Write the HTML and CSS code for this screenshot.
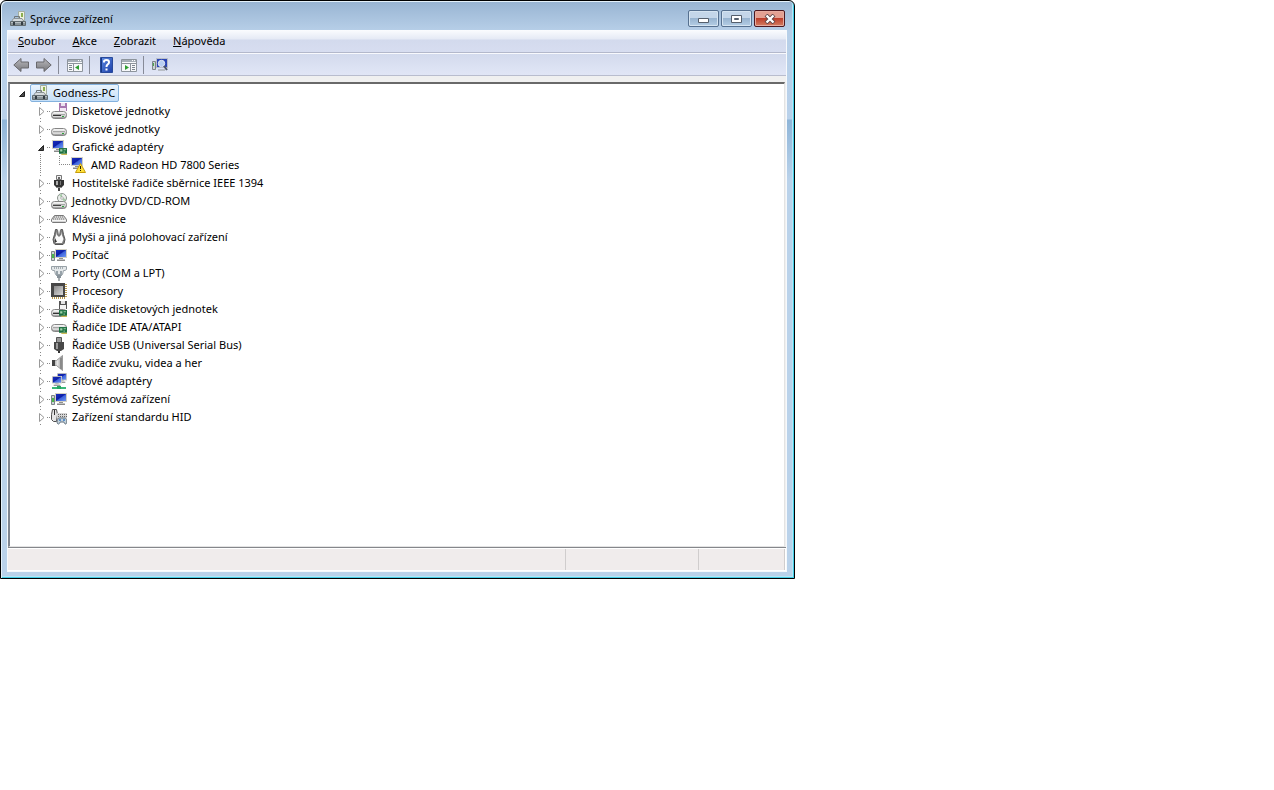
FILE: index.html
```html
<!DOCTYPE html>
<html lang="cs">
<head>
<meta charset="utf-8">
<title>Správce zařízení</title>
<link rel="stylesheet" href="styles.css">
</head>
<body>
<svg class="defs" aria-hidden="true">
  <defs>
    <linearGradient id="gBlue" x1="0" y1="0" x2="1" y2="1"><stop offset="0" stop-color="#1a2fc0"/><stop offset=".45" stop-color="#0d1fa6"/><stop offset=".55" stop-color="#3f63dc"/><stop offset="1" stop-color="#6e97f0"/></linearGradient>
    <linearGradient id="gGrey" x1="0" y1="0" x2="1" y2="0"><stop offset="0" stop-color="#8b8b8b"/><stop offset=".5" stop-color="#e6e6e6"/><stop offset="1" stop-color="#8d8d8d"/></linearGradient>
    <linearGradient id="gArrow" x1="0" y1="0" x2="0" y2="1"><stop offset="0" stop-color="#b9b9bd"/><stop offset="1" stop-color="#77777b"/></linearGradient>
    <linearGradient id="gHelp" x1="0" y1="0" x2="1" y2="1"><stop offset="0" stop-color="#5f8ce4"/><stop offset="1" stop-color="#1c3fa8"/></linearGradient>
    <linearGradient id="gChip" x1="0" y1="0" x2="1" y2="1"><stop offset="0" stop-color="#8a8a8a"/><stop offset="1" stop-color="#d8d8d8"/></linearGradient>
    <linearGradient id="gDrive" x1="0" y1="0" x2="0" y2="1"><stop offset="0" stop-color="#fbfbfb"/><stop offset=".5" stop-color="#dadada"/><stop offset="1" stop-color="#8f8f8f"/></linearGradient>

    <symbol id="open" viewBox="0 0 19 18"><path d="M11.500 7.500v5h-5z" fill="#4a4a4a" stroke="#222" stroke-linejoin="round"/></symbol>
    <symbol id="closed" viewBox="0 0 19 18"><path d="M7.500 5.500v8l4.500-4z" fill="#fff" stroke="#999"/></symbol>

    <symbol id="board" viewBox="0 0 7 6"><path d="M0 0h7v5H0z" fill="#1c7040"/><path d="M1 1h2v2H1zM4 1h2v1H4zM4 3h1v1H4z" fill="#9fd0aa"/><path d="M2 5h5v1H2z" fill="#c9b64a"/></symbol>
    <symbol id="screen" viewBox="0 0 12 12"><path d="M0 0h12v9H0z" fill="#d3d1c4"/><path d="M1 1h10v7H1z" fill="url(#gBlue)"/><path d="M4 9h4v1H4z" fill="#8f8f8f"/><path d="M2 10h8v1H2z" fill="#c4c4c4"/><path d="M2 11h8v1H2z" fill="#8a8a8a"/></symbol>
    <symbol id="drive" viewBox="0 0 16 8"><rect x=".5" y=".5" width="15" height="7" rx="3" fill="url(#gDrive)" stroke="#858585"/><path d="M2 3.500h12" stroke="#a5a5a5"/><path d="M2 5.500h12" stroke="#d9d9d9"/><path d="M11 5h2v1h-2z" fill="#2ca23a"/></symbol>

    <symbol id="manager" viewBox="0 0 16 16"><path d="M8.500 .5h6v9h-6z" fill="#eef2e2" stroke="#a3ada0"/><path d="M11 2h2v4h-2z" fill="#8bae50"/><path d="M4.500 7.500v-2h5v2" fill="none" stroke="#6f777b"/><path d="M3.500 7.500h8.500l2 3H1.500z" fill="#d5dadc" stroke="#8b9397"/><path d="M.5 10.500h15v4H.5z" fill="#8a9498" stroke="#626c70"/><path d="M1 11h14v1H1z" fill="#b7bfc2"/><path d="M3 11h2v3H3zM11 11h2v3h-2z" fill="#343d43"/></symbol>
    <symbol id="floppy-drive" viewBox="0 0 16 16"><path d="M8 0h8v8H8z" fill="#a878b0"/><path d="M10 0h4v3h-4z" fill="#ece4ef"/><path d="M9 5h6v3H9z" fill="#f3e9f5"/><use href="#drive" y="8" width="16" height="8"/><path d="M2 12h8v1H2z" fill="#333"/></symbol>
    <symbol id="disk-drive" viewBox="0 0 16 16"><use href="#drive" y="7" width="16" height="8"/></symbol>
    <symbol id="display" viewBox="0 0 16 16"><use href="#screen" x="1" y="1" width="12" height="12"/><use href="#board" x="8" y="9" width="8" height="7"/></symbol>
    <symbol id="warning" viewBox="0 0 16 16"><use href="#screen" x="1" y="0" width="12" height="12"/><path d="M10.500 6.500l5 9h-10z" fill="#ffe13a" stroke="#c79d0c" stroke-linejoin="round"/><path d="M10 9h1v3h-1zM10 13h1v1h-1z" fill="#2b2400"/></symbol>
    <symbol id="firewire" viewBox="0 0 16 16"><path d="M5.500 .5h5v4h-5z" fill="#efefef" stroke="#777"/><path d="M7 2h2v2H7z" fill="#666"/><path d="M3 5h10v5l-2 2H5l-2-2z" fill="#333"/><path d="M5 6h2v4H5z" fill="#aaa"/><path d="M9 6h1v4H9z" fill="#777"/><path d="M5 12h6v1H5z" fill="#888"/><path d="M7 13h2v3H7z" fill="#444"/></symbol>
    <symbol id="usb" viewBox="0 0 16 16"><path d="M5.500 .5h5v5h-5z" fill="#999" stroke="#555"/><path d="M3 5h10v7l-3 2H6l-3-2z" fill="#484848"/><path d="M5 6h2v6H5z" fill="#9a9a9a"/><path d="M7 14h2v2H7z" fill="#333"/></symbol>
    <symbol id="optical" viewBox="0 0 16 16"><circle cx="11" cy="5" r="4.500" fill="#eceeec" stroke="#8b948e"/><path d="M11 5L8 2l3-1zM11 5l4 1-2 3z" fill="#a3cba5"/><circle cx="11" cy="5" r="1.300" fill="#fff" stroke="#777" stroke-width=".5"/><use href="#drive" y="8" width="16" height="8"/><path d="M2 12h8v1H2z" fill="#444"/></symbol>
    <symbol id="keyboard" viewBox="0 0 16 16"><path d="M3.500 4.500h9l3 4v2l-1 1h-13l-1-1v-2z" fill="#d4d4d4" stroke="#777"/><path d="M3 6h10M2 8h12" stroke="#777" stroke-dasharray="1 1"/><path d="M1 9h14v1H1z" fill="#f5f5f5"/></symbol>
    <symbol id="mouse" viewBox="0 0 16 16"><path d="M4.500 .5h7l1 5 1.500 5-1 4-1 1H4l-1-1-1-4 1.500-5z" fill="#7d7d7d" stroke="#555"/><path d="M6.500 0h3l1 5 2 5-1.500 4h-6L3.500 10l2-5z" fill="#fafafa"/><path d="M6 1h1l1 5 1-5h1v5l-2 2-2-2z" fill="#777"/><path d="M4 9v4h2z" fill="#333"/></symbol>
    <symbol id="computer" viewBox="0 0 16 16"><path d="M.5 4.500h3v9h-3z" fill="#ccd2d5" stroke="#7d8589"/><path d="M1 7h2v4H1z" fill="#49b64a"/><use href="#screen" x="4" y="2" width="12" height="12"/></symbol>
    <symbol id="port" viewBox="0 0 16 16"><path d="M.5 1.500h15v3l-1.500 1h-1.500l-1 4h-7l-1-4H2L.500 4.500z" fill="#e4e8ea" stroke="#98a1a7"/><path d="M3 3h10" stroke="#66727a" stroke-dasharray="1 1"/><path d="M5 6h2v5H5zM9 6h2v5H9z" fill="#97a2a9"/><path d="M6 10h4v3H6z" fill="#89939a"/><path d="M7 13h2v3H7z" fill="#a8adb0"/></symbol>
    <symbol id="chip" viewBox="0 0 16 16"><path d="M15 1v14M1 15h14" stroke="#b8994c" stroke-width="2" stroke-dasharray="1 1"/><path d="M0 0h14v14H0z" fill="#474747"/><path d="M3 3h9v9H3z" fill="url(#gChip)"/></symbol>
    <symbol id="floppy-ctl" viewBox="0 0 16 16"><path d="M8 0h8v8H8z" fill="#555"/><path d="M10 0h4v3h-4z" fill="#e6e6e6"/><path d="M9 4h6v4H9z" fill="#f4f4f4"/><use href="#drive" y="8" width="16" height="8"/><path d="M2 12h6v1H2z" fill="#333"/><use href="#board" x="8" y="9" width="8" height="7"/></symbol>
    <symbol id="ide" viewBox="0 0 16 16"><use href="#drive" y="5" width="16" height="8"/><use href="#board" x="8" y="8" width="8" height="7"/></symbol>
    <symbol id="sound" viewBox="0 0 16 16"><path d="M1.500 5.500h4l6-5v15l-6-5h-4z" fill="url(#gGrey)" stroke="#9b9b9b"/><path d="M9 3h2v11H9z" fill="#8a8a8a"/><path d="M1 5h3v6H1z" fill="#444"/></symbol>
    <symbol id="network" viewBox="0 0 16 16"><use href="#screen" x="6" y="0" width="10" height="10"/><use href="#screen" x="1" y="3" width="10" height="10"/><path d="M1 14h14v2H1z" fill="#39b778"/><path d="M6 13h4v3H6z" fill="#27a563"/></symbol>
    <symbol id="hid" viewBox="0 0 16 16"><path d="M1.500 .5h4l1 5-1 7h-3l-2-2v-5z" fill="#e5e5e5" stroke="#505050"/><path d="M3 1h1v5H3z" fill="#333"/><path d="M6 4h10v5H6z" fill="#d5d5d5"/><path d="M7 5.500h9M7 7.500h9" stroke="#666" stroke-dasharray="1 1"/><path d="M7 15c-2-1 0-6 1-6h6c2 0 2 5 1 6-1 1-2-2-2-2H9s-1 3-2 2z" fill="#c3d2dd" stroke="#63717c"/><circle cx="9" cy="11" r="1" fill="#397ac3"/><circle cx="13" cy="11" r="1" fill="#397ac3"/></symbol>

    <symbol id="back" viewBox="0 0 16 16"><path d="M.8 8L8 1.500V5h7.500v6H8v3.500z" fill="url(#gArrow)" stroke="#68686c" stroke-linejoin="round"/></symbol>
    <symbol id="forward" viewBox="0 0 16 16"><path d="M15.200 8L8 1.500V5H.5v6H8v3.500z" fill="url(#gArrow)" stroke="#68686c" stroke-linejoin="round"/></symbol>
    <symbol id="pane" viewBox="0 0 16 16"><path d="M.5 2.500h15v12H.5z" fill="#f7f8fa" stroke="#8d949c"/><path d="M1 3h14v2H1z" fill="#a7afb8"/><path d="M11 3h1v1h-1zM13 3h1v1h-1z" fill="#fff"/><path d="M1 6.500h14" stroke="#8d949c"/><path d="M6.500 7v7" stroke="#8d949c"/><path d="M2 8.500h3M2 10.500h3M2 12.500h3" stroke="#7c858e"/><path d="M12 8v5l-4-2.500z" fill="#2f9e31"/></symbol>
    <symbol id="pane-right" viewBox="0 0 16 16"><path d="M.5 2.500h15v12H.5z" fill="#f7f8fa" stroke="#8d949c"/><path d="M1 3h14v2H1z" fill="#a7afb8"/><path d="M11 3h1v1h-1zM13 3h1v1h-1z" fill="#fff"/><path d="M1 6.500h14" stroke="#8d949c"/><path d="M9.500 7v7" stroke="#8d949c"/><path d="M11 8.500h3M11 10.500h3M11 12.500h3" stroke="#7c858e"/><path d="M4 8v5l4-2.500z" fill="#2f9e31"/></symbol>
    <symbol id="help" viewBox="0 0 16 16"><path d="M2.500 .5h12v15h-12z" fill="url(#gHelp)" stroke="#294a9b"/><path d="M3 1h1v14H3z" fill="#173985"/><path d="M6 5.500V4.500Q6 3 8.500 3T11 5.200Q11 6.500 9.700 7.300T8.500 10M8.500 11.500v2" fill="none" stroke="#fff" stroke-width="2"/></symbol>
    <symbol id="scan" viewBox="0 0 16 16"><path d="M.5 4.500h3v8h-3z" fill="#ccd2d5" stroke="#7d8589"/><path d="M1 6h1v3H1z" fill="#49a64a"/><path d="M4.500 1.500h11v9h-11z" fill="#2b45b4" stroke="#b9bec9"/><path d="M6 12h7v2H6z" fill="#b9bec5"/><circle cx="9.500" cy="6.500" r="3.200" fill="#b9cff2" stroke="#e4e9f2"/><path d="M12 9l3 4" stroke="#4f5868" stroke-width="2"/></symbol>
  </defs>
</svg>

<main class="window">
  <header class="titlebar">
    <svg class="icon"><use href="#manager"/></svg>
    <h1 class="title">Správce zařízení</h1>
    <div class="controls">
      <button class="control" aria-label="Minimalizovat"><svg viewBox="0 0 12 10"><path d="M.5 4.500h10v4H.5z" fill="#fff" stroke="#555f6c"/></svg></button>
      <button class="control" aria-label="Maximalizovat"><svg viewBox="0 0 12 10"><path d="M.5 1.500h10v7H.5z" fill="#fff" stroke="#555f6c"/><path d="M3.500 4.500h4v1h-4z" fill="#9fb8d2" stroke="#555f6c"/></svg></button>
      <button class="control control-close" aria-label="Zavřít"><svg viewBox="0 0 12 10"><path d="M2 1l8 8M10 1L2 9" stroke="#5b4446" stroke-width="4"/><path d="M2.500 1.500l7 7M9.500 1.500l-7 7" stroke="#fff" stroke-width="2.400"/></svg></button>
    </div>
  </header>
  <div class="client">
    <nav class="menubar">
      <button class="menu"><u>S</u>oubor</button>
      <button class="menu"><u>A</u>kce</button>
      <button class="menu"><u>Z</u>obrazit</button>
      <button class="menu"><u>N</u>ápověda</button>
    </nav>
    <div class="toolbar" role="toolbar">
      <button class="tool" aria-label="Zpět"><svg class="icon"><use href="#back"/></svg></button>
      <button class="tool" aria-label="Vpřed"><svg class="icon"><use href="#forward"/></svg></button>
      <span class="separator"></span>
      <button class="tool" aria-label="Zobrazit strom konzoly"><svg class="icon"><use href="#pane"/></svg></button>
      <span class="separator"></span>
      <button class="tool" aria-label="Nápověda"><svg class="icon"><use href="#help"/></svg></button>
      <button class="tool" aria-label="Zobrazit podokno akcí"><svg class="icon"><use href="#pane-right"/></svg></button>
      <span class="separator"></span>
      <button class="tool" aria-label="Vyhledat změny hardwaru"><svg class="icon"><use href="#scan"/></svg></button>
    </div>
    <section class="panel">
      <ul class="tree">
        <li>
          <div class="row"><button class="toggle" aria-label="Sbalit"><svg><use href="#open"/></svg></button><span class="selected"><svg class="icon"><use href="#manager"/></svg><span class="label">Godness-PC</span></span></div>
          <ul class="branch">
            <li class="row"><button class="toggle guide" aria-label="Rozbalit"><svg><use href="#closed"/></svg></button><svg class="icon"><use href="#floppy-drive"/></svg><span class="label">Disketové jednotky</span></li>
            <li class="row"><button class="toggle guide" aria-label="Rozbalit"><svg><use href="#closed"/></svg></button><svg class="icon"><use href="#disk-drive"/></svg><span class="label">Diskové jednotky</span></li>
            <li>
              <div class="row"><button class="toggle guide" aria-label="Sbalit"><svg><use href="#open"/></svg></button><svg class="icon"><use href="#display"/></svg><span class="label">Grafické adaptéry</span></div>
              <ul class="leaves">
                <li class="row"><span class="elbow"></span><svg class="icon"><use href="#warning"/></svg><span class="label">AMD Radeon HD 7800 Series</span></li>
              </ul>
            </li>
            <li class="row"><button class="toggle guide" aria-label="Rozbalit"><svg><use href="#closed"/></svg></button><svg class="icon"><use href="#firewire"/></svg><span class="label">Hostitelské řadiče sběrnice IEEE 1394</span></li>
            <li class="row"><button class="toggle guide" aria-label="Rozbalit"><svg><use href="#closed"/></svg></button><svg class="icon"><use href="#optical"/></svg><span class="label">Jednotky DVD/CD-ROM</span></li>
            <li class="row"><button class="toggle guide" aria-label="Rozbalit"><svg><use href="#closed"/></svg></button><svg class="icon"><use href="#keyboard"/></svg><span class="label">Klávesnice</span></li>
            <li class="row"><button class="toggle guide" aria-label="Rozbalit"><svg><use href="#closed"/></svg></button><svg class="icon"><use href="#mouse"/></svg><span class="label">Myši a jiná polohovací zařízení</span></li>
            <li class="row"><button class="toggle guide" aria-label="Rozbalit"><svg><use href="#closed"/></svg></button><svg class="icon"><use href="#computer"/></svg><span class="label">Počítač</span></li>
            <li class="row"><button class="toggle guide" aria-label="Rozbalit"><svg><use href="#closed"/></svg></button><svg class="icon"><use href="#port"/></svg><span class="label">Porty (COM a LPT)</span></li>
            <li class="row"><button class="toggle guide" aria-label="Rozbalit"><svg><use href="#closed"/></svg></button><svg class="icon"><use href="#chip"/></svg><span class="label">Procesory</span></li>
            <li class="row"><button class="toggle guide" aria-label="Rozbalit"><svg><use href="#closed"/></svg></button><svg class="icon"><use href="#floppy-ctl"/></svg><span class="label">Řadiče disketových jednotek</span></li>
            <li class="row"><button class="toggle guide" aria-label="Rozbalit"><svg><use href="#closed"/></svg></button><svg class="icon"><use href="#ide"/></svg><span class="label">Řadiče IDE ATA/ATAPI</span></li>
            <li class="row"><button class="toggle guide" aria-label="Rozbalit"><svg><use href="#closed"/></svg></button><svg class="icon"><use href="#usb"/></svg><span class="label">Řadiče USB (Universal Serial Bus)</span></li>
            <li class="row"><button class="toggle guide" aria-label="Rozbalit"><svg><use href="#closed"/></svg></button><svg class="icon"><use href="#sound"/></svg><span class="label">Řadiče zvuku, videa a her</span></li>
            <li class="row"><button class="toggle guide" aria-label="Rozbalit"><svg><use href="#closed"/></svg></button><svg class="icon"><use href="#network"/></svg><span class="label">Síťové adaptéry</span></li>
            <li class="row"><button class="toggle guide" aria-label="Rozbalit"><svg><use href="#closed"/></svg></button><svg class="icon"><use href="#computer"/></svg><span class="label">Systémová zařízení</span></li>
            <li class="row"><button class="toggle guide" aria-label="Rozbalit"><svg><use href="#closed"/></svg></button><svg class="icon"><use href="#hid"/></svg><span class="label">Zařízení standardu HID</span></li>
          </ul>
        </li>
      </ul>
    </section>
    <footer class="statusbar"><span></span><span></span><span></span></footer>
  </div>
</main>
</body>
</html>
```
FILE: styles.css
```css
* { box-sizing: border-box; }
body {
  margin: 0;
  background: #fff;
  color: #000;
  font: 11px/18px "Noto Sans", "Open Sans", sans-serif;
}
button {
  margin: 0;
  padding: 0;
  border: 0;
  background: none;
  color: inherit;
  font: inherit;
}
ul { margin: 0; padding: 0; list-style: none; }
svg { display: block; flex: none; }
.defs { position: absolute; width: 0; height: 0; }
.icon { width: 16px; height: 16px; }

.window {
  max-width: 795px;
  border: 1px solid #000;
  border-radius: 6px 6px 0 0;
  padding: 0 7px 6px 6px;
  background: linear-gradient(#98b4d2 0, #b7cfe8 30px, #b9d1ea 118px, #8fb5d8 119px, #bad2ea 180px);
  box-shadow: inset 1px 1px 0 #e4f1fa, inset -1px -1px 0 #45cce6, inset -2px -2px 0 #b5e6f5;
}
.titlebar {
  display: flex;
  align-items: center;
  gap: 4px;
  height: 29px;
  padding: 6px 2px 0 3px;
}
.title { flex: 1; margin: 0; font-size: 11px; font-weight: 400; }
.controls { display: flex; gap: 2px; }
.control {
  display: grid;
  place-items: center;
  width: 31px;
  height: 17px;
  border: 1px solid #56708f;
  border-radius: 2px;
  background: linear-gradient(#c4d6e9 0 45%, #98b4d0 50%, #b4cee5);
  box-shadow: inset 0 0 0 1px #d5e4f1;
}
.control svg { width: 12px; height: 10px; }
.control-close {
  border-color: #4c1820;
  background: linear-gradient(#e3a092 0 45%, #bd3e2b 50%, #d47f62);
  box-shadow: inset 0 0 0 1px #e6aca0;
}

.client { border: 1px solid #f6f9fc; border-top: 0; background: #f0f0f0; }
.menubar {
  display: flex;
  gap: 17px;
  height: 23px;
  padding: 0 10px 1px;
  border-bottom: 1px solid #b3b8cb;
  background: linear-gradient(#fbfcfe, #e5eaf5 9px, #d3daed 10px, #d7ddf0);
}
.toolbar {
  display: flex;
  align-items: center;
  height: 23px;
  padding: 0 1px;
  border-top: 1px solid #f8f9fd;
  border-bottom: 1px solid #b9bdce;
  background: linear-gradient(#d3daed, #e1e6f6);
}
.tool { padding: 0 3px 0 4px; }
.separator { width: 1px; height: 18px; margin: 0 4px 0 3px; background: #878b98; }

.panel {
  min-height: 465px;
  margin: 6px 1px 0 0;
  border: 1px solid #e3e3e3;
  border-top: 2px solid #696969;
  border-left: 2px solid #808690;
  background: #fff;
}
.tree { padding-left: 3px; }
.branch, .leaves { padding-left: 19px; }
.row { display: flex; align-items: center; height: 18px; white-space: nowrap; }
.label { padding-left: 5px; }
.toggle, .toggle svg { width: 19px; height: 18px; }
.guide {
  background:
    linear-gradient(#888, #888) 8px 1px / 1px 1px no-repeat,
    linear-gradient(#888, #888) 8px 16px / 1px 1px no-repeat,
    repeating-linear-gradient(90deg, #888 0 1px, #fff 1px 2px) 15px 9px / 4px 1px no-repeat;
}
.leaves {
  background: repeating-linear-gradient(#888 0 1px, #fff 1px 2px) 8px 0 / 1px 100% no-repeat;
}
.elbow {
  width: 19px;
  height: 18px;
  background:
    repeating-linear-gradient(#888 0 1px, #fff 1px 2px) 8px 0 / 1px 9px no-repeat,
    repeating-linear-gradient(90deg, #888 0 1px, #fff 1px 2px) 8px 8px / 11px 1px no-repeat;
}
.selected {
  display: flex;
  align-items: center;
  height: 18px;
  margin-left: -2px;
  padding: 0 3px 0 1px;
  border: 1px solid #84b2de;
  border-radius: 2px;
  background: linear-gradient(#eaf4fd, #c5dff8);
}
.statusbar {
  display: grid;
  grid-template-columns: 558fr 133fr 86fr;
  height: 24px;
  padding: 1px 1px 1px 0;
  border-top: 1px solid #85878b;
  background: #fff;
}
.statusbar span { border-right: 1px solid #d0cdcd; background: #f0ecec; }
```
